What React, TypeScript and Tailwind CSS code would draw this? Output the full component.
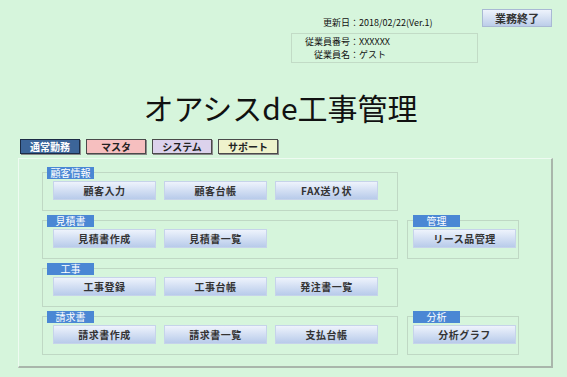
import React from 'react'

const jp = { fontFamily: '"Noto Sans CJK JP", "Noto Sans", sans-serif' }

type Group = { title: string; items: string[] }

// left column groups and right column groups, row by row (null = empty cell)
const rows: [Group, Group | null][] = [
  [{ title: '顧客情報', items: ['顧客入力', '顧客台帳', 'FAX送り状'] }, null],
  [{ title: '見積書', items: ['見積書作成', '見積書一覧'] }, { title: '管理', items: ['リース品管理'] }],
  [{ title: '工事', items: ['工事登録', '工事台帳', '発注書一覧'] }, null],
  [{ title: '請求書', items: ['請求書作成', '請求書一覧', '支払台帳'] }, { title: '分析', items: ['分析グラフ'] }],
]

const tabs = [
  { label: '通常勤務', cls: 'bg-[#3c6599] text-white border-[#1c2c46]' },
  { label: 'マスタ', cls: 'bg-[#f6bfbf] text-[#222] border-[#4a4a4a]' },
  { label: 'システム', cls: 'bg-[#dcd2ec] text-[#222] border-[#4a4a4a]' },
  { label: 'サポート', cls: 'bg-[#eff2cc] text-[#222] border-[#4a4a4a]' },
]

function MenuButton({ label }: { label: string }) {
  return (
    <button className="w-[103px] h-[19px] border border-[#c6d3ea] bg-gradient-to-b from-[#eef3fc] to-[#b8cbea] text-[10px] font-bold tracking-[0.5px] text-[#333] leading-none">
      {label}
    </button>
  )
}

function GroupBox({ group, narrow }: { group: Group; narrow?: boolean }) {
  return (
    <div className="relative pt-[5px]">
      <div
        className={`h-[39px] border border-[#bfd8c4] flex gap-[8px] pt-[8px] ${narrow ? 'pl-[5px]' : 'pl-[10px]'}`}
      >
        {group.items.map(i => (
          <MenuButton key={i} label={i} />
        ))}
      </div>
      <div
        className={`absolute top-0 w-[47px] h-[12px] bg-[#4a87d4] text-white text-[10px] leading-[12px] text-center ${narrow ? 'left-[6px]' : 'left-[5px]'}`}
      >
        {group.title}
      </div>
    </div>
  )
}

export default function App() {
  return (
    <div className="w-[567px] h-[377px] bg-[#d6f5dc] text-[#111] overflow-hidden" style={jp}>
      {/* header: update date, employee box, logout */}
      <div className="flex pl-[291px] pt-[9px]">
        <div className="w-[187px]">
          <div className="pt-[8px] pl-[32px] text-[9px] leading-[12px]">更新日：2018/02/22(Ver.1)</div>
          <div className="mt-[4px] h-[30px] border border-[#c2dbc6] pt-[1px] text-[9px] leading-[13px]">
            <div className="flex">
              <span className="w-[67px] text-right">従業員番号：</span>
              <span>XXXXXX</span>
            </div>
            <div className="flex">
              <span className="w-[67px] text-right">従業員名：</span>
              <span>ゲスト</span>
            </div>
          </div>
        </div>
        <button className="ml-[4px] w-[70px] h-[18px] border border-[#a9b9d4] bg-gradient-to-b from-[#eef3fc] to-[#bccde9] text-[11px] font-bold text-[#333] leading-none">
          業務終了
        </button>
      </div>

      {/* title */}
      <h1 className="mt-[26px] text-center text-[30px] leading-[36px] pr-[6px]">オアシスde工事管理</h1>

      {/* tabs */}
      <div className="flex gap-[6px] ml-[20px] mt-[14px]">
        {tabs.map(t => (
          <button
            key={t.label}
            className={`w-[60px] h-[15px] border text-[10px] font-bold leading-none shadow-[1px_1px_0_#8a8a8a] ${t.cls}`}
          >
            {t.label}
          </button>
        ))}
      </div>

      {/* main panel */}
      <div className="ml-[18px] mt-[4px] w-[535px] h-[210px] border-t border-l border-[#eefbf1] border-r-2 border-b-2 border-r-[#a9b6ab] border-b-[#a9b6ab] pl-[23px] pt-[8px]">
        <div className="grid grid-cols-[356px_112px] gap-x-[9px] gap-y-[4px]">
          {rows.map(([left, right], idx) => (
            <React.Fragment key={idx}>
              <GroupBox group={left} />
              {right ? <GroupBox group={right} narrow /> : <div />}
            </React.Fragment>
          ))}
        </div>
      </div>
    </div>
  )
}
